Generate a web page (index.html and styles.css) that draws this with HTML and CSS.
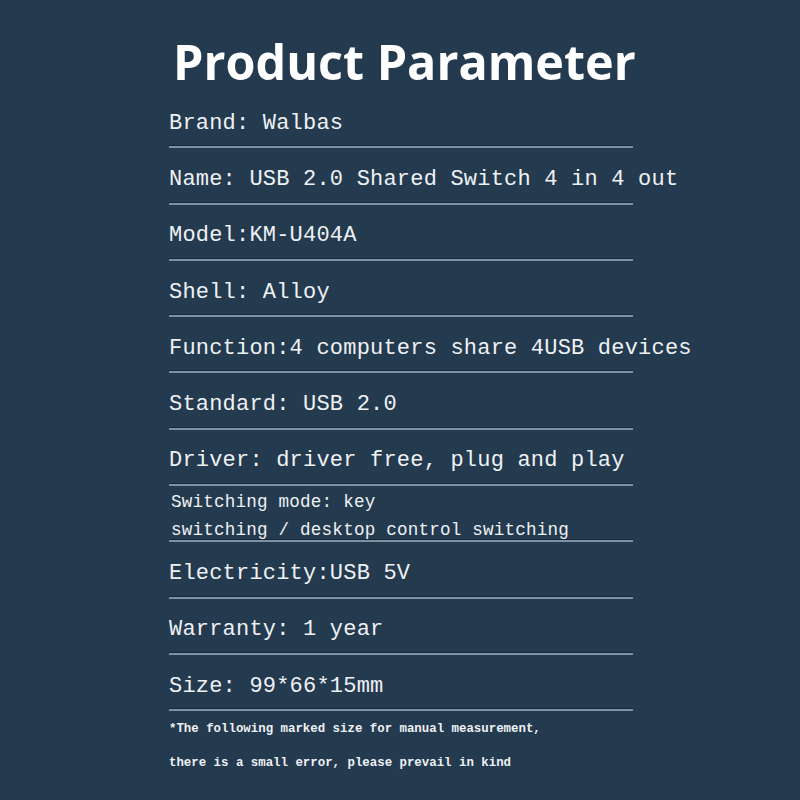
FILE: index.html
```html
<!DOCTYPE html>
<html>
<head>
<meta charset="utf-8">
<link rel="stylesheet" href="styles.css">
</head>
<body>
<div class="sheet">
  <h1 class="title">Product Parameter</h1>
  <div class="list">
    <div class="row">Brand: Walbas</div>
    <div class="row">Name: USB 2.0 Shared Switch 4 in 4 out</div>
    <div class="row">Model:KM-U404A</div>
    <div class="row">Shell: Alloy</div>
    <div class="row">Function:4 computers share 4USB devices</div>
    <div class="row">Standard: USB 2.0</div>
    <div class="row">Driver: driver free, plug and play</div>
    <div class="row row-small"><span>Switching mode: key</span><span>switching / desktop control switching</span></div>
    <div class="row">Electricity:USB 5V</div>
    <div class="row">Warranty: 1 year</div>
    <div class="row">Size: 99*66*15mm</div>
  </div>
  <div class="note">
    <p>*The following marked size for manual measurement,</p>
    <p>there is a small error, please prevail in kind</p>
  </div>
</div>
</body>
</html>
```

FILE: styles.css
```css
html, body {
  margin: 0;
  padding: 0;
  background: #243a4f;
  width: 800px;
  height: 800px;
  overflow: hidden;
}
.sheet {
  width: 464px;
  margin-left: 169px;
  color: #eef1f4;
}
.title {
  margin: 0;
  height: 92px;
  box-sizing: border-box;
  padding-top: 33px;
  font-family: "Open Sans", sans-serif;
  font-weight: 700;
  font-size: 48.5px;
  line-height: 56px;
  text-align: center;
  color: #ffffff;
  margin-left: 4px;
  white-space: nowrap;
}
.list {
  display: flex;
  flex-direction: column;
}
.row {
  height: 56.3px;
  box-sizing: border-box;
  display: flex;
  flex-direction: column;
  justify-content: center;
  padding-top: 8px;
  font-family: "Liberation Mono", monospace;
  font-size: 22px;
  white-space: nowrap;
  border-bottom: 2px solid #7e91a4;
  box-shadow: 0 -1px 0 #172838 inset;
  letter-spacing: 0.2px;
}
.row-small {
  font-size: 17.6px;
  line-height: 28px;
  padding-left: 2px;
  padding-top: 6px;
  padding-bottom: 0;
}
.note {
  padding-top: 1px;
  font-family: "Liberation Mono", monospace;
  font-weight: 700;
  font-size: 12.4px;
}
.note p {
  margin: 0;
  height: 34px;
  line-height: 34px;
}
```
